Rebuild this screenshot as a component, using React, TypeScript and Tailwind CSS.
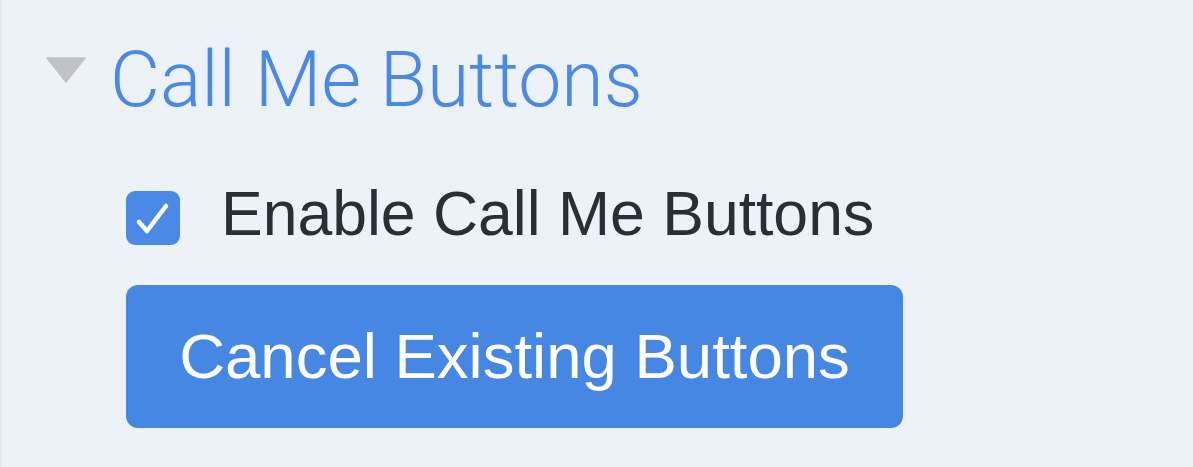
export default function App() {
  return (
    <div className="w-[1193px] h-[467px] overflow-hidden bg-[#edf1f8] border-l-2 border-[#e3e7ee] pl-[44px] pt-[40px]">
      {/* Section header */}
      <div className="flex items-start">
        <svg width="40" height="26" viewBox="0 0 40 26" className="mt-[17px] shrink-0">
          <path d="M1 1 L39 1 L20 25 Z" fill="#bfc3c9" stroke="#bfc3c9" strokeWidth="1.5" strokeLinejoin="round" />
        </svg>
        <h2 className="ml-[24px] mt-[2px] text-[77px] leading-none font-light text-[#4a89e6] font-['Roboto','Liberation_Sans',sans-serif]">
          Call Me Buttons
        </h2>
      </div>

      {/* Enable toggle */}
      <label className="mt-[63px] ml-[80px] flex items-start">
        <span className="mt-[9px] w-[54px] h-[54px] rounded-[9px] bg-[#4a8ae6] flex items-center justify-center shrink-0">
          <svg width="54" height="54" viewBox="0 0 54 54">
            <path d="M13 31 L21 40 L40 15" fill="none" stroke="#fff" strokeWidth="4.5" strokeLinecap="round" strokeLinejoin="round" />
          </svg>
        </span>
        <span className="ml-[41px] text-[62.5px] leading-none text-[#2a2e35] font-['Liberation_Sans',Arial,sans-serif]">
          Enable Call Me Buttons
        </span>
      </label>

      {/* Action */}
      <button className="mt-[40px] ml-[80px] w-[777px] h-[143px] rounded-[12px] bg-[#4687e4] flex items-center justify-center text-[63.5px] leading-none text-white font-['Liberation_Sans',Arial,sans-serif]">
        Cancel Existing Buttons
      </button>
    </div>
  );
}
